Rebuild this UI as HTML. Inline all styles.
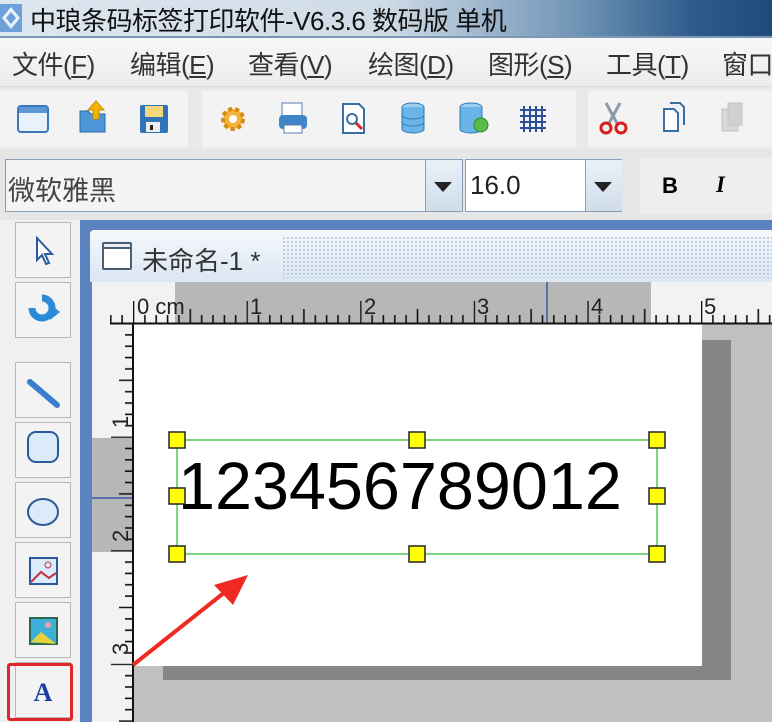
<!DOCTYPE html>
<html><head><meta charset="utf-8"><style>
*{margin:0;padding:0;box-sizing:border-box}
body{width:772px;height:722px;overflow:hidden;position:relative;background:#f0f0f0;font-family:"Liberation Sans","Noto Sans CJK SC",sans-serif}
.abs{position:absolute}
#title{left:0;top:0;width:772px;height:36px;background:linear-gradient(90deg,#dde7f0 0%,#cfdbe6 50%,#6f93b5 75%,#2d5b8a 90%,#1e4a78 100%)}
#title span{position:absolute;left:30px;top:1px;font-size:26px;color:#111;letter-spacing:-0.5px;white-space:nowrap}
#menu{left:0;top:36px;width:772px;height:50px;background:linear-gradient(#f7f7f7,#ececec);border-top:2px solid #7a96b4;overflow:hidden}
#menu span{position:absolute;top:7px;font-size:26px;color:#333;letter-spacing:-0.5px;white-space:nowrap}
#tb{left:0;top:86px;width:772px;height:64px;background:#e9e9e9;border-top:1px solid #ddd}
.grp{position:absolute;top:4px;height:56px;background:#f3f3f3}
#fb{left:0;top:150px;width:772px;height:70px;background:#e6e6e6}
.btn{position:absolute;left:15px;width:56px;height:56px;border:1px solid #b8b8b8;background:#f3f3f3}
</style></head><body>
<div id="title" class="abs">
<svg class="abs" style="left:0;top:4px" width="24" height="28"><rect x="0" y="0" width="22" height="28" fill="#6fa0d8"/><path d="M11 3 L20 14 L11 25 L2 14Z" fill="#e9f2fb"/><path d="M11 8 L16 14 L11 20 L6 14Z" fill="#6fa0d8"/></svg>
<span>中琅条码标签打印软件-V6.3.6 数码版 单机</span></div>
<div id="menu" class="abs">
<span style="left:12px">文件(<u>F</u>)</span><span style="left:130px">编辑(<u>E</u>)</span><span style="left:248px">查看(<u>V</u>)</span><span style="left:368px">绘图(<u>D</u>)</span><span style="left:488px">图形(<u>S</u>)</span><span style="left:606px">工具(<u>T</u>)</span><span style="left:722px">窗口</span>
</div>
<div id="tb" class="abs">
<div class="grp" style="left:0;width:188px"></div>
<div class="grp" style="left:202px;width:374px"></div>
<div class="grp" style="left:588px;width:184px"></div>
<svg class="abs" style="left:0;top:0" width="772" height="64">
<rect x="18" y="19" width="30" height="26" rx="3" fill="#e8f2fb" stroke="#3c78b8" stroke-width="2"/><rect x="19" y="20" width="28" height="6" fill="#5a9ad6"/>
<path d="M80 24 h8 l3 3 h14 v18 h-25z" fill="#4d97d8" stroke="#2a6aa8"/><path d="M96 14 l8 9 h-5 v9 h-6 v-9 h-5z" fill="#f5b400" stroke="#c98a00"/>
<rect x="140" y="18" width="28" height="28" rx="2" fill="#2f73b8"/><rect x="145" y="19" width="18" height="11" fill="#f6d77a"/><rect x="146" y="35" width="14" height="10" fill="#eee"/><rect x="150" y="38" width="3" height="5" fill="#222"/>
<circle cx="233" cy="32" r="10" fill="#f4b23a" stroke="#d48a10" stroke-width="4" stroke-dasharray="4 3"/><circle cx="233" cy="32" r="4" fill="#fff"/>
<rect x="282" y="16" width="20" height="14" fill="#fff" stroke="#5a7fa8"/><rect x="279" y="28" width="28" height="14" rx="4" fill="#3f86c8"/><rect x="284" y="38" width="18" height="8" fill="#fff" stroke="#5a7fa8"/>
<path d="M343 17 h16 l5 5 v24 h-21z" fill="#fff" stroke="#3a6fa6" stroke-width="2"/><circle cx="352" cy="32" r="5" fill="none" stroke="#3a6fa6" stroke-width="2"/><path d="M356 36 l6 6" stroke="#d02a2a" stroke-width="3"/>
<ellipse cx="413" cy="20" rx="11" ry="4" fill="#9bd0f2" stroke="#2f78b8"/><path d="M402 20 v22 a11 4 0 0 0 22 0 v-22" fill="#6ab4e8" stroke="#2f78b8"/><path d="M402 28 a11 4 0 0 0 22 0 M402 35 a11 4 0 0 0 22 0" fill="none" stroke="#2f78b8"/>
<ellipse cx="471" cy="20" rx="11" ry="4" fill="#9bd0f2" stroke="#2f78b8"/><path d="M460 20 v22 a11 4 0 0 0 22 0 v-22" fill="#6ab4e8" stroke="#2f78b8"/><circle cx="481" cy="38" r="7" fill="#5cba4a" stroke="#2c8a2c"/>
<path d="M524 19 v26 M530 19 v26 M536 19 v26 M542 19 v26 M520 23 h26 M520 29 h26 M520 35 h26 M520 41 h26" stroke="#2c4f9a" stroke-width="2"/>
<path d="M606 16 l12 22 M620 16 l-12 22" stroke="#8a9aaa" stroke-width="3"/><circle cx="606" cy="41" r="5" fill="none" stroke="#d81e1e" stroke-width="3"/><circle cx="621" cy="41" r="5" fill="none" stroke="#d81e1e" stroke-width="3"/>
<path d="M664 22 h10 l4 4 v18 h-14z" fill="#fff" stroke="#3a6fa6" stroke-width="2"/><path d="M670 16 h10 l4 4 v18" fill="none" stroke="#3a6fa6" stroke-width="2"/>
<rect x="722" y="22" width="16" height="22" fill="#d8d8d8" stroke="#c4c4c4"/><rect x="728" y="16" width="14" height="22" fill="#d0d0d0" stroke="#c4c4c4"/>
</svg></div>
<div id="fb" class="abs">
<div class="abs" style="left:5px;top:9px;width:458px;height:53px;background:#f4f4f4;border:1px solid #8a9fb6"></div>
<span class="abs" style="left:8px;top:19px;font-size:27px;color:#444">微软雅黑</span>
<div class="abs" style="left:425px;top:10px;width:37px;height:51px;background:linear-gradient(#eaf1f8,#cfdde9);border-left:1px solid #8a9fb6"></div>
<div class="abs" style="left:434px;top:32px;border-left:9px solid transparent;border-right:9px solid transparent;border-top:10px solid #222"></div>
<div class="abs" style="left:465px;top:9px;width:157px;height:53px;background:#fff;border:1px solid #8a9fb6"></div>
<span class="abs" style="left:470px;top:20px;font-size:26px;color:#222">16.0</span>
<div class="abs" style="left:585px;top:10px;width:37px;height:51px;background:linear-gradient(#eaf1f8,#cfdde9);border-left:1px solid #8a9fb6"></div>
<div class="abs" style="left:594px;top:32px;border-left:9px solid transparent;border-right:9px solid transparent;border-top:10px solid #222"></div>
<div class="abs" style="left:640px;top:8px;width:132px;height:56px;background:#eeeeee"></div>
<b class="abs" style="left:662px;top:23px;font-size:22px">B</b>
<i class="abs" style="left:716px;top:22px;font-size:23px;font-family:'Liberation Serif',serif;font-weight:bold">I</i>
</div>
<div class="abs" style="left:0;top:220px;width:80px;height:502px;background:#f0f0f0"></div>
<div class="btn" style="top:222px"></div><div class="btn" style="top:282px"></div>
<div class="btn" style="top:362px"></div><div class="btn" style="top:422px"></div><div class="btn" style="top:482px"></div><div class="btn" style="top:542px"></div><div class="btn" style="top:602px"></div><div class="btn" style="top:662px"></div>
<div class="abs" style="left:7px;top:663px;width:66px;height:58px;border:3px solid #e0262a;border-radius:3px"></div>
<svg class="abs" style="left:0;top:220px" width="80" height="502">
<path d="M37 18 v22 l5 -5 l4 9 l3 -1 l-4 -9 h7z" fill="#fff" stroke="#2a5aa0" stroke-width="2"/>
<path d="M42 78 a10 10 0 1 1 -10 10" fill="none" stroke="#2a8ad8" stroke-width="7"/><path d="M50 84 l10 8 l-10 8z" fill="#2a8ad8"/>
<path d="M30 162 l27 23" stroke="#3a7ed0" stroke-width="6" stroke-linecap="round"/>
<rect x="28" y="212" width="30" height="30" rx="8" fill="#dcebfa" stroke="#2a5a9a" stroke-width="2"/>
<ellipse cx="43" cy="292" rx="15" ry="13" fill="#dcebfa" stroke="#2a5a9a" stroke-width="2"/>
<rect x="30" y="338" width="27" height="26" fill="#dcebfa" stroke="#2a5a9a" stroke-width="2"/><path d="M31 362 l10 -10 l8 6 l7 -5" fill="none" stroke="#c03040" stroke-width="2"/><circle cx="48" cy="345" r="3" fill="none" stroke="#c03040"/>
<rect x="30" y="398" width="27" height="26" fill="#3cb0d8" stroke="#2a6a4a" stroke-width="2"/><path d="M31 422 l10 -10 l15 12z" fill="#e9d23a"/><circle cx="48" cy="405" r="3" fill="#f0a0a0"/>
<text x="43" y="481" text-anchor="middle" font-family="Liberation Serif,serif" font-weight="bold" font-size="26" fill="#1a3fa0">A</text>
</svg>
<div class="abs" style="left:80px;top:220px;width:692px;height:502px;background:#5b83c0"></div>
<div class="abs" style="left:90px;top:230px;width:682px;height:52px;background:linear-gradient(#f4f8fc,#dbe6f2);border-radius:4px 0 0 0"></div>
<div class="abs" style="left:282px;top:236px;width:490px;height:42px;background-image:radial-gradient(#b9c9dc 1px,transparent 1.2px);background-size:4px 4px"></div>
<div class="abs" style="left:102px;top:242px;width:30px;height:28px;border:2px solid #4a5e74;border-radius:2px;background:#fff"><div style="height:5px;border-bottom:2px solid #4a5e74;background:#e8eef4"></div></div>
<span class="abs" style="left:142px;top:241px;font-size:26px;color:#333">未命名-1 *</span>
<div class="abs" style="left:92px;top:282px;width:680px;height:440px;background:#c0c0c0"></div>
<div class="abs" style="left:92px;top:282px;width:680px;height:42px;background:#f2f2f2"></div>
<div class="abs" style="left:175px;top:282px;width:476px;height:42px;background:#b7b7b7"></div>
<div class="abs" style="left:92px;top:282px;width:41px;height:440px;background:#f2f2f2"></div>
<div class="abs" style="left:92px;top:438px;width:41px;height:114px;background:#b7b7b7"></div>
<div class="abs" style="left:546px;top:282px;width:2px;height:42px;background:#5872a8"></div>
<div class="abs" style="left:92px;top:497px;width:41px;height:2px;background:#5872a8"></div>
<div class="abs" style="left:163px;top:340px;width:568px;height:340px;background:#868686"></div>
<div class="abs" style="left:134px;top:324px;width:568px;height:342px;background:#fff"></div>
<svg class="abs" style="left:0;top:0" width="772" height="722">
<defs>
<pattern id="ht" x="133" y="0" width="113.6" height="722" patternUnits="userSpaceOnUse">
<path d="M0.5 301v22 M11.9 315v8 M23.2 315v8 M34.6 315v8 M45.9 315v8 M57.3 309v14 M68.7 315v8 M80 315v8 M91.4 315v8 M102.7 315v8" stroke="#111" stroke-width="1.6"/></pattern>
<pattern id="vt" x="0" y="323" width="772" height="113.6" patternUnits="userSpaceOnUse">
<path d="M111 0.5h22 M125 11.9h8 M125 23.2h8 M125 34.6h8 M125 45.9h8 M119 57.3h14 M125 68.7h8 M125 80h8 M125 91.4h8 M125 102.7h8" stroke="#111" stroke-width="1.6"/></pattern>
</defs>
<rect x="110" y="300" width="662" height="24" fill="url(#ht)"/>
<rect x="108" y="324" width="26" height="398" fill="url(#vt)"/>
<path d="M110 323.5h662 M133 323v399" stroke="#111" stroke-width="2"/>
<g font-family="Liberation Sans,sans-serif" font-size="22" fill="#222">
<text x="137" y="314">0 cm</text><text x="250" y="314">1</text><text x="364" y="314">2</text><text x="477" y="314">3</text><text x="591" y="314">4</text><text x="704" y="314">5</text>
<text transform="translate(128,428) rotate(-90)">1</text><text transform="translate(128,542) rotate(-90)">2</text><text transform="translate(128,655) rotate(-90)">3</text>
</g>
<rect x="177" y="440" width="480" height="114" fill="none" stroke="#55cc55" stroke-width="1.5"/>
<text x="178" y="509" font-family="Liberation Sans,sans-serif" font-size="66.5" fill="#000">123456789012</text>
<g fill="#ffff00" stroke="#222" stroke-width="1.5">
<rect x="169" y="432" width="16" height="16"/><rect x="409" y="432" width="16" height="16"/><rect x="649" y="432" width="16" height="16"/>
<rect x="169" y="488" width="16" height="16"/><rect x="649" y="488" width="16" height="16"/>
<rect x="169" y="546" width="16" height="16"/><rect x="409" y="546" width="16" height="16"/><rect x="649" y="546" width="16" height="16"/>
</g>
<path d="M133 665 L225 592" stroke="#ee2a22" stroke-width="4"/>
<path d="M248 575 L214 585 L233 605Z" fill="#ee2a22"/>
</svg>
</body></html>
